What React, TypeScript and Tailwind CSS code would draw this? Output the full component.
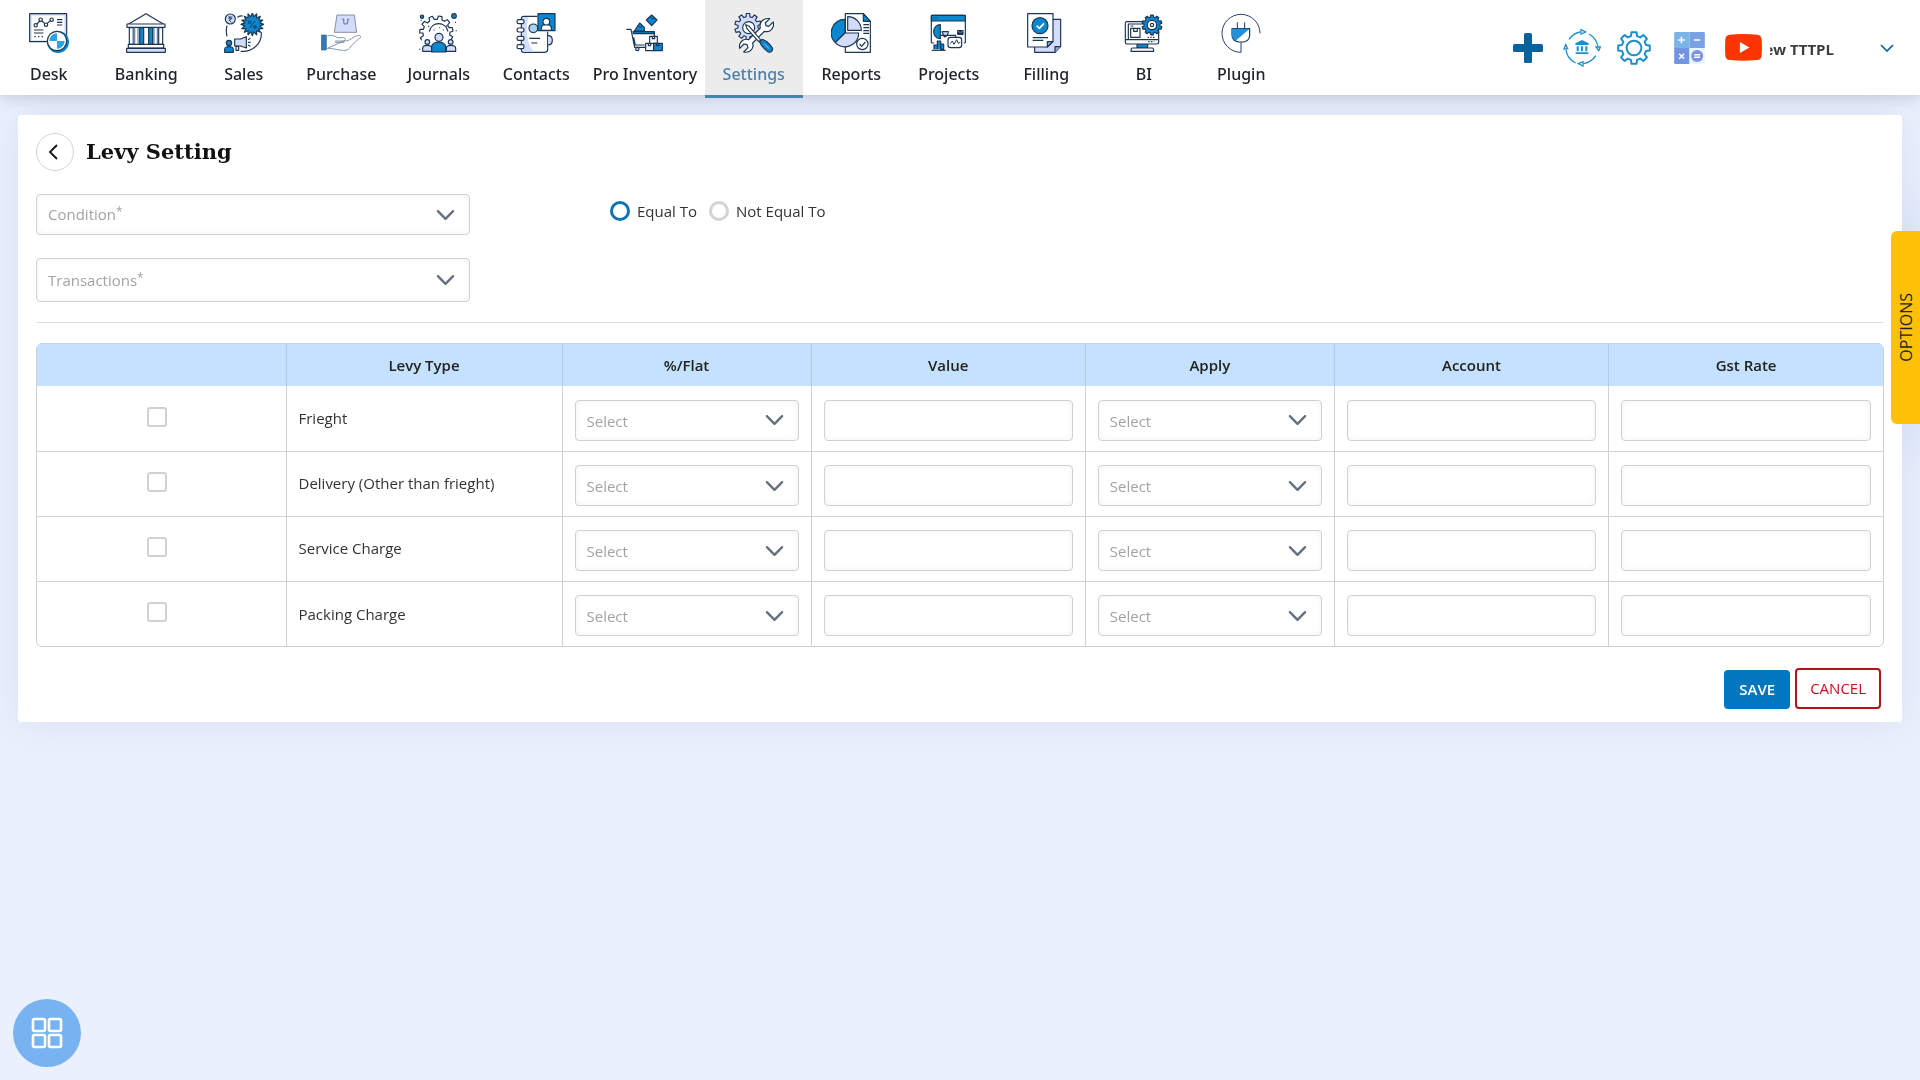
import { useState } from "react";
import type { ReactNode } from "react";

const NAVY = "#1c3553";
const BLUE = "#0b87cf";
const LILAC = "#d3dcf8";

// closed outline of a cog; depth is how far the teeth stand out
function gearPath(cx: number, cy: number, teeth: number, outer: number, depth: number) {
  const inner = outer - depth;
  const step = (Math.PI * 2) / teeth;
  const points: string[] = [];
  for (let i = 0; i < teeth; i++) {
    const a = i * step - Math.PI / 2;
    const corners = [
      [inner, -0.32],
      [outer, -0.2],
      [outer, 0.2],
      [inner, 0.32],
    ];
    for (const [r, t] of corners) {
      const x = cx + r * Math.cos(a + t * step);
      const y = cy + r * Math.sin(a + t * step);
      points.push(`${x.toFixed(1)} ${y.toFixed(1)}`);
    }
  }
  return `M${points.join("L")}Z`;
}

function starPath(cx: number, cy: number, spikes: number, outer: number, inner: number) {
  const points: string[] = [];
  for (let i = 0; i < spikes * 2; i++) {
    const r = i % 2 === 0 ? outer : inner;
    const a = (i * Math.PI) / spikes - Math.PI / 2;
    points.push(`${(cx + r * Math.cos(a)).toFixed(1)} ${(cy + r * Math.sin(a)).toFixed(1)}`);
  }
  return `M${points.join("L")}Z`;
}

function NavIcon({ children }: { children: ReactNode }) {
  return (
    <svg
      viewBox="0 0 120 120"
      className="h-10 w-10"
      fill="none"
      stroke={NAVY}
      strokeWidth={3.5}
      strokeLinejoin="round"
      aria-hidden="true"
    >
      {children}
    </svg>
  );
}

function DeskIcon() {
  return (
    <NavIcon>
      <rect x="2" y="2" width="111" height="84" fill={LILAC} />
      <rect x="8" y="8" width="98" height="74" fill="#fff" stroke="none" />
      <path d="M20 37 35 21 51 35 67 20" />
      <circle cx="20" cy="37" r="5" fill="#fff" />
      <circle cx="35" cy="20" r="5" fill="#fff" />
      <circle cx="51" cy="35" r="5" fill="#fff" />
      <circle cx="68" cy="20" r="5" fill="#fff" />
      <path d="M84 20h16M84 28h16M84 36h16M15 51h28M15 60h28" />
      <path d="M16 71h28" strokeDasharray="4 7" />
      <circle cx="87" cy="87" r="33" fill={BLUE} stroke="none" />
      <circle cx="84" cy="84" r="29" fill="#fff" />
      <path d="M84 84V61a23 23 0 0 0-23 23ZM84 84v23a23 23 0 0 0 23-23Z" fill="#2ba3e3" stroke="none" />
    </NavIcon>
  );
}

function BankingIcon() {
  return (
    <NavIcon>
      <path d="M8 33 60 2l52 31" fill="#fff" />
      <rect x="3" y="33" width="114" height="10" fill="#fff" />
      <path d="M10 44h12v50H10zM98 44h12v50H98z" fill="#fff" />
      <path d="M22 44v50M26 44v50M94 44v50M36 44v50M84 44v50" stroke="#5f7da6" />
      <path d="M41 44h12v50H41zM68 44h12v50H68z" fill={BLUE} />
      <rect x="7" y="94" width="106" height="11" fill="#fff" />
      <rect x="2" y="106" width="116" height="12" fill={LILAC} />
    </NavIcon>
  );
}

function SalesIcon() {
  return (
    <NavIcon>
      <circle cx="19" cy="18" r="15" fill={LILAC} />
      <path d="M13 12h12M13 17h12M15 12c9 0 9 9 0 9l7 7" strokeWidth="2.5" />
      <path d="M40 13q8-5 16-4M9 38q-4 14 0 32M112 58c2 30-22 60-62 57" />
      <path d={starPath(85, 34, 16, 34, 23)} fill={BLUE} />
      <path d="M93 24 77 45" strokeWidth="3" />
      <circle cx="77" cy="28" r="4" strokeWidth="3" />
      <circle cx="93" cy="42" r="4" strokeWidth="3" />
      <path d="M2 118v-8c0-12 26-12 26 0v8Z" fill={BLUE} />
      <circle cx="15" cy="90" r="8" fill={BLUE} />
      <path d="M32 78h18l17-7v34l-17-6H32z" fill={LILAC} />
      <path d="M36 100h8v12h-8zM72 80l7-4M72 88h8M72 96l7 4" />
    </NavIcon>
  );
}

function PurchaseIcon() {
  return (
    <NavIcon>
      <g stroke="#6d7f9d" strokeWidth="2.5">
        <path d="M48 6h52l7 52H40z" fill={LILAC} />
        <path d="M63 19h5v8c0 8 12 8 12 0v-8h5" stroke="#7084b0" strokeWidth="3.5" />
        <path
          d="M19 69c10-4 22-1 30 5h18c8 0 8 9 1 10H42M68 84c14 1 22-6 31-12 10-6 21-6 21 0-8 6-24 20-34 33-8 10-20 7-30 6-12-1-22-6-37-5Z"
          fill="#fff"
        />
        <path d="M42 88h28" />
      </g>
      <rect x="1" y="66" width="15" height="45" fill="#3677b5" stroke="#2d659c" strokeWidth="2" />
    </NavIcon>
  );
}

function JournalsIcon() {
  return (
    <NavIcon>
      <path d="M8 82 4 74l9-6-1-8H2l1-11h10l3-8-7-7 7-9 9 5 7-6-2-10 10-4 6 9h9l3-10 11 2v10l7 4 9-5 7 8-6 8 4 8h10l2 10-9 4-1 8 9 5-4 8" />
      <path d="M31 56c6-32 50-32 56 0M82 37l3 4M30 38l-2 4" />
      <path d="M44 51h2M60 44h2M73 51h2" strokeWidth="4" />
      <circle cx="9" cy="11" r="5" fill={BLUE} />
      <circle cx="105" cy="9" r="7" fill={BLUE} />
      <circle cx="25" cy="87" r="7" fill={LILAC} />
      <circle cx="95" cy="87" r="7" fill={LILAC} />
      <path d="M11 115v-9c0-12 27-12 27 0v9ZM82 115v-9c0-12 28-12 28 0v9Z" fill={LILAC} />
      <circle cx="60" cy="73" r="12" fill={LILAC} />
      <path d="M38 117v-16c0-18 42-18 42 0v16Z" fill={BLUE} />
      <path d="M1 109h3M110 53h3M5 22h3M108 28h3" strokeWidth="4" />
    </NavIcon>
  );
}

function ContactsIcon() {
  return (
    <NavIcon>
      <path d="M64 10H24q-8 0-8 8v92q0 8 8 8h62q9 0 9-9V56" fill="#fff" />
      <path d="M18 20v90q0 6 8 6h28C30 92 28 40 38 12H24q-6 0-6 8" fill={LILAC} stroke="none" />
      <path d="M96 68q13 0 13 14t-13 14" fill={LILAC} />
      <circle cx="52" cy="46" r="13" fill="#a9d3f3" />
      <rect x="66" y="2" width="51" height="51" fill={BLUE} />
      <path d="M76 52v-6c0-16 30-16 30 0v6Z" fill="#fff" />
      <circle cx="91" cy="26" r="10" fill="#fff" />
      <path d="M40 76h32M46 90h18" />
      {[20, 45, 70, 95].map((y) => (
        <rect key={y} x="3" y={y} width="21" height="12" rx="5" fill="#fff" />
      ))}
    </NavIcon>
  );
}

function InventoryIcon() {
  return (
    <NavIcon>
      <path d="M80 6 96 21 80 38 64 21ZM28 54l16-24 14 13v11Z" fill={BLUE} />
      <path d="m76 12 6 6 7-2M40 38l6 5 5-3" strokeWidth="3" />
      <path d="M4 49h14l11 54h33M24 58h64v18M26 73l5 23h28" />
      <path d="M24 56h64v6H25z" fill={BLUE} />
      <circle cx="37" cy="108" r="5" fill={LILAC} />
      <path d="M74 70h23v21H74zM62 91h24v22H62z" fill="#fff" />
      <path d="M86 91h26v22H86z" fill={BLUE} />
      <path d="M82 70v7h7v-7M70 91v7h7v-7M95 91v7h7v-7" />
    </NavIcon>
  );
}

function SettingsIcon() {
  return (
    <NavIcon>
      <path d={gearPath(42, 41, 10, 40, 10)} fill={LILAC} />
      <circle cx="44" cy="44" r="18" fill="#fff" />
      <path
        d="M107 17 94 30l2 8 8 2 14-13c4 18-10 33-27 28L56 90c5 17-9 31-27 27l13-13-3-9-9-2-13 13c-4-17 10-31 27-26l35-35c-5-18 10-31 28-28Z"
        fill="#fff"
      />
      <path d="m35 35 11 5 34 41-6 5-35-39Z" fill="#fff" />
      <path d="m77 87 7-8c10 2 22 13 30 24 6 10-7 19-14 12-12-10-19-18-23-28Z" fill={BLUE} />
      <path d="m91 92 14 15" stroke="#7cc3ee" strokeWidth="3" />
    </NavIcon>
  );
}

function ReportsIcon() {
  return (
    <NavIcon>
      <path d="M43 2h54l21 23v93H43Z" fill="#fff" />
      <path d="M97 2v23h21Z" fill={BLUE} />
      <path d="M97 35h17M97 44h17M97 53h17M97 61h17" />
      <path d="M42 60V19a41 41 0 0 0-29 70Z" fill={BLUE} />
      <path d="M42 60h41a41 41 0 0 1-70 29Z" fill={LILAC} />
      <path d="M50 11v41h41a41 41 0 0 0-41-41Z" fill={LILAC} />
      <circle cx="94" cy="93" r="17" fill="#fff" />
      <path d="m86 93 6 7 11-13" />
    </NavIcon>
  );
}

function ProjectsIcon() {
  return (
    <NavIcon>
      <path d="M7 90V11q0-4 4-4h94q4 0 4 4v79M108 90h-4M7 90h8" />
      <path d="M7 7h102v17H7Z" fill={BLUE} />
      <path d="M13 15h14" strokeDasharray="3 3" />
      <path d="M34 35a20 21 0 0 0 0 42Z" fill={BLUE} />
      <path d="M39 56h19q-1 14-12 16Z" fill={LILAC} />
      <path d="M34 67h46v10" />
      <rect x="86" y="53" width="16" height="11" fill={NAVY} />
      <path d="m86 54 8 5 8-5" stroke="#8aa3c4" strokeWidth="2" />
      <rect x="57" y="73" width="41" height="31" rx="8" fill="#fff" />
      <path d="m64 92 6-8 5 10 8-14 5 11 6-3" strokeWidth="3" />
      <path d="M15 109V96h10v13M25 109V84h10v25M35 109V93h9v16Z" fill={BLUE} />
      <path d="M8 112h42" />
    </NavIcon>
  );
}

function FillingIcon() {
  return (
    <NavIcon>
      <path d="M30 19h74v81l-17 18H26V60" fill={LILAC} />
      <path d="M87 118v-17h17" fill="#8fa6cf" />
      <path d="M5 2h76v83l-17 17H5Z" fill="#fff" />
      <path d="M64 102V86h17Z" fill="#8fa6cf" />
      <circle cx="42" cy="38" r="24" fill={BLUE} />
      <path d="m32 38 8 8 14-15" stroke="#fff" strokeWidth="5" />
      <path d="M20 74h46M20 82h32" />
    </NavIcon>
  );
}

function BiIcon() {
  return (
    <NavIcon>
      <path d="M39 92h32v13H39z" fill={BLUE} />
      <path d="M25 105h60q4 0 4 10H21q0-10 4-10Z" fill="#fff" />
      <rect x="4" y="26" width="100" height="67" rx="5" fill="#fff" />
      <path d="M60 33H13v46" />
      <path d="M5 80h98" />
      <rect x="20" y="46" width="28" height="27" fill="#fff" />
      <path d="M29 46v9h11v-9M20 39h8" />
      <path d="M71 73h20M73 86h18" strokeDasharray="4 4" />
      <path d={gearPath(84, 36, 10, 30, 6)} fill={BLUE} />
      <circle cx="84" cy="36" r="14" fill="#fff" />
      <circle cx="84" cy="36" r="5" fill="#fff" />
    </NavIcon>
  );
}

function PluginIcon() {
  return (
    <NavIcon>
      <path d="M117 61A57 57 0 1 0 60 118V88" stroke="#27406f" strokeWidth="3" />
      <path d="M33 47h53v20c0 12-9 20-20 20H54C42 87 33 78 33 67Z" fill="#fff" />
      <path d="M33 47h53L44 83c-7-4-11-9-11-16Z" fill="#2390d8" stroke="none" />
      <path d="M49 28v19M71 28v19" strokeWidth="3" />
    </NavIcon>
  );
}

const navItems = [
  { label: "Desk", icon: <DeskIcon /> },
  { label: "Banking", icon: <BankingIcon /> },
  { label: "Sales", icon: <SalesIcon /> },
  { label: "Purchase", icon: <PurchaseIcon /> },
  { label: "Journals", icon: <JournalsIcon /> },
  { label: "Contacts", icon: <ContactsIcon /> },
  { label: "Pro Inventory", icon: <InventoryIcon />, wide: true },
  { label: "Settings", icon: <SettingsIcon />, active: true },
  { label: "Reports", icon: <ReportsIcon /> },
  { label: "Projects", icon: <ProjectsIcon /> },
  { label: "Filling", icon: <FillingIcon /> },
  { label: "BI", icon: <BiIcon /> },
  { label: "Plugin", icon: <PluginIcon /> },
];

const levyTypes = ["Frieght", "Delivery (Other than frieght)", "Service Charge", "Packing Charge"];

function Chevron() {
  return (
    <svg
      viewBox="0 0 20 12"
      className="pointer-events-none absolute top-1/2 right-[15px] h-3 w-[19px] -translate-y-1/2"
      fill="none"
      stroke="#64707d"
      strokeWidth="2.5"
      strokeLinecap="round"
      strokeLinejoin="round"
      aria-hidden="true"
    >
      <path d="m2 2 8 8 8-8" />
    </svg>
  );
}

const fieldClass =
  "block w-full rounded border border-[#cfd1d4] bg-white text-[15px] outline-none shadow-[inset_0_0_6px_rgba(0,0,0,0.05)] focus:border-[#0277bd]";

function LabelledSelect({ id, label, height }: { id: string; label: string; height: string }) {
  const [value, setValue] = useState("");

  return (
    <div className="relative">
      <select
        id={id}
        value={value}
        onChange={(event) => setValue(event.target.value)}
        className={`${fieldClass} ${height} appearance-none px-3`}
      >
        <option value=""></option>
      </select>
      <label
        htmlFor={id}
        className="pointer-events-none absolute inset-y-0 left-3 flex items-center text-[15px] text-[#a3a3a3]"
      >
        <span>
          {label}
          <sup className="-top-1 text-xs">*</sup>
        </span>
      </label>
      <Chevron />
    </div>
  );
}

function CellSelect({ label }: { label: string }) {
  return (
    <div className="relative">
      <select
        aria-label={label}
        className={`${fieldClass} h-[41px] appearance-none px-[11px] pt-px text-[#a3a3a3]`}
      >
        <option>Select</option>
      </select>
      <Chevron />
    </div>
  );
}

function TopBar() {
  return (
    <header className="relative z-20 flex h-[95px] justify-between bg-white shadow-[0_2px_14px_rgba(60,70,100,0.25)]">
      <nav className="flex h-[98px] max-w-[1290px] flex-1">
        {navItems.map((item) => (
          <a
            key={item.label}
            href="#"
            className={`flex flex-col items-center border-b-3 pt-[13px] font-['Noto_Sans',sans-serif] text-base font-medium whitespace-nowrap ${
              item.wide ? "w-[120px]" : "flex-1"
            } ${
              item.active
                ? "border-[#4584ab] bg-[#ececec] text-[#4a80aa]"
                : "border-transparent text-[#212529]"
            }`}
          >
            {item.icon}
            <span className="mt-[9px]">{item.label}</span>
          </a>
        ))}
      </nav>

      <div className="flex items-center gap-4 pr-[26px]">
        <button aria-label="Add">
          <svg viewBox="0 0 30 30" className="h-[30px] w-[30px]" fill="#08629c">
            <rect x="11" width="8" height="30" rx="1.5" />
            <rect y="11" width="30" height="8" rx="1.5" />
          </svg>
        </button>
        <button aria-label="Bank sync" className="ml-1">
          <svg viewBox="0 0 114 114" className="h-[38px] w-[38px]" fill="none" stroke="#1c8fcc" strokeWidth="4">
            <path d="M18 31Q32 12 52 9M78 15q22 12 27 38M98 80q-11 19-36 24M38 102Q12 90 9 62" />
            <path d="m54 2 14 7-14 6ZM99 54h13l-5 11ZM60 98v13l-14-7ZM3 60l5-13 6 12Z" fill="#fff" />
            <path
              d="M57 33 77 43v5H37v-5ZM41 52h6v15h-6zM54 52h6v15h-6zM67 52h6v15h-6zM38 70h38v5H38z"
              fill="#1c8fcc"
              stroke="none"
            />
          </svg>
        </button>
        <button aria-label="Preferences">
          <svg viewBox="0 0 102 102" className="h-[34px] w-[34px]" fill="none" stroke="#1c8fcc" strokeWidth="6">
            <path d={gearPath(51, 51, 8, 48, 11)} strokeLinejoin="round" />
            <circle cx="51" cy="51" r="22" />
          </svg>
        </button>
        <button aria-label="Calculator" className="ml-[7px]">
          <svg viewBox="0 0 92 96" className="h-8 w-[31px]">
            <path d="M4 0h42v48H0V4q0-4 4-4Z" fill="#78b6e8" />
            <path d="M46 0h42q4 0 4 4v44H46Z" fill="#7aa0e6" />
            <path d="M0 48h46v48H4q-4 0-4-4Z" fill="#7295e2" />
            <path d="M46 48h46v44q0 4-4 4H46Z" fill="#e9f4fe" />
            <circle cx="69" cy="72" r="18" fill="#7b92df" />
            <path
              d="M12 24h20M22 14v20M59 24h19M15 65l15 15M30 65 15 80M60 68h18M60 76h18"
              stroke="#fff"
              strokeWidth="4.5"
            />
          </svg>
        </button>
        <a href="#" aria-label="YouTube" className="ml-1">
          <svg viewBox="0 0 112 82" className="h-[27px] w-[37px]">
            <path
              d="M14 2q42-4 84 0 12 1 13 14 2 25 0 50-1 12-13 13-42 4-84 0Q2 78 1 66q-2-25 0-50Q2 3 14 2Z"
              fill="#fd3302"
            />
            <path d="M45 24v34l29-17Z" fill="#fff" />
          </svg>
        </a>
        <div className="mt-1 -ml-2 flex w-16 justify-end overflow-hidden">
          <span className="text-[15px] font-bold whitespace-nowrap text-[#3d3d3d]">New TTTPL</span>
        </div>
        <button aria-label="Switch company" className="ml-[30px]">
          <svg viewBox="0 0 14 8" className="h-2 w-3.5" fill="none" stroke="#08629c" strokeWidth="1.7">
            <path d="m1 1 6 6 6-6" />
          </svg>
        </button>
      </div>
    </header>
  );
}

export default function App() {
  const [condition, setCondition] = useState("none");

  return (
    <div className="min-h-screen bg-[#eaf0fd] font-['Open_Sans',sans-serif] text-[#333]">
      <TopBar />

      <main className="relative z-10 mx-[18px] mt-5 rounded bg-white px-[18px] pt-[18px] pb-[13px] shadow-[0_0_40px_rgba(90,110,160,0.12)]">
        <div className="flex items-center gap-3">
          <button
            aria-label="Back"
            className="flex h-[38px] w-[38px] items-center justify-center rounded-full border border-[#d5d5d5]"
          >
            <svg viewBox="0 0 10 16" className="mr-1 h-4 w-2.5" fill="none" stroke="#111" strokeWidth="1.8">
              <path d="M9 1 2 8l7 7" />
            </svg>
          </button>
          <h1 className="font-['DejaVu_Serif',serif] text-[21px] leading-7 font-bold text-[#111]">Levy Setting</h1>
        </div>

        <div className="mt-[23px] flex gap-[140px]">
          <div className="flex w-[434px] flex-col gap-[23px]">
            <LabelledSelect id="condition" label="Condition" height="h-[41px]" />
            <LabelledSelect id="transactions" label="Transactions" height="h-11" />
          </div>
          <div className="mt-[7px] flex items-start gap-3">
            <label className="flex h-5 items-center gap-[7px] text-[15px]">
              <input
                type="radio"
                name="condition-match"
                checked={condition === "equal"}
                onChange={() => setCondition("equal")}
                className="h-5 w-5 appearance-none rounded-full border-3 border-[#0b74b8] checked:bg-[#0b74b8]"
              />
              Equal To
            </label>
            <label className="flex h-5 items-center gap-[7px] text-[15px]">
              <input
                type="radio"
                name="condition-match"
                checked={condition === "not-equal"}
                onChange={() => setCondition("not-equal")}
                className="h-5 w-5 appearance-none rounded-full border-3 border-[#d3d3d3] checked:bg-[#d3d3d3]"
              />
              Not Equal To
            </label>
          </div>
        </div>

        <hr className="mt-5 border-[#dedede]" />

        <div className="mt-5 overflow-hidden rounded-md border border-[#cfd1d4]">
          <table className="w-full table-fixed border-collapse">
            <thead>
              <tr className="h-[42px] bg-[#c4e1fd] text-[15px] text-[#222]">
                <th className="w-[249px] border-r border-[#aecdea]"></th>
                <th className="w-[276px] border-r border-[#aecdea] font-semibold">Levy Type</th>
                <th className="w-[249px] border-r border-[#aecdea] font-semibold">%/Flat</th>
                <th className="border-r border-[#aecdea] font-semibold">Value</th>
                <th className="w-[249px] border-r border-[#aecdea] font-semibold">Apply</th>
                <th className="border-r border-[#aecdea] font-semibold">Account</th>
                <th className="font-semibold">Gst Rate</th>
              </tr>
            </thead>
            <tbody className="divide-y divide-[#cfd1d4]">
              {levyTypes.map((levy) => (
                <tr key={levy} className="h-[65px] divide-x divide-[#cfd1d4] text-[15px]">
                  <td className="pr-2 pb-1.5 text-center">
                    <input
                      type="checkbox"
                      aria-label={levy}
                      className="h-5 w-5 appearance-none rounded-[3px] border-2 border-[#cfd1d4] align-middle checked:bg-[#0277bd]"
                    />
                  </td>
                  <td className="px-3">{levy}</td>
                  <td className="px-3 pt-1">
                    <CellSelect label={`${levy} percent or flat`} />
                  </td>
                  <td className="px-3 pt-1">
                    <input aria-label={`${levy} value`} className={`${fieldClass} h-[41px] px-3`} />
                  </td>
                  <td className="px-3 pt-1">
                    <CellSelect label={`${levy} apply`} />
                  </td>
                  <td className="px-3 pt-1">
                    <input aria-label={`${levy} account`} className={`${fieldClass} h-[41px] px-3`} />
                  </td>
                  <td className="px-3 pt-1">
                    <input aria-label={`${levy} gst rate`} className={`${fieldClass} h-[41px] px-3`} />
                  </td>
                </tr>
              ))}
            </tbody>
          </table>
        </div>

        <div className="mt-[21px] flex items-end justify-end gap-[5px] pr-[3px]">
          <button className="h-[39px] rounded bg-[#0277bd] px-[15px] text-[15px] font-semibold text-white">
            SAVE
          </button>
          <button className="h-[41px] rounded border-2 border-[#b5121b] px-[13px] text-[15px] font-medium text-[#c4111b]">
            CANCEL
          </button>
        </div>
      </main>

      <div className="fixed top-[231px] right-0 z-0 h-[193px] w-px shadow-[0_0_60px_10px_rgba(90,150,220,0.4)]" />
      <button className="fixed top-[231px] right-0 z-20 flex h-[193px] w-[29px] items-center justify-center rounded-l-md bg-[#ffc107] text-base text-[#222]">
        <span className="rotate-180 [writing-mode:vertical-rl]">OPTIONS</span>
      </button>

      <button
        aria-label="Apps"
        className="fixed bottom-[13px] left-[13px] z-20 flex h-[68px] w-[68px] items-center justify-center rounded-full bg-[#76b3f0]"
      >
        <svg viewBox="0 0 32 32" className="h-8 w-8" fill="none" stroke="#fff" strokeWidth="2.6">
          <rect x="2" y="2" width="12" height="12" rx="1.5" />
          <rect x="18" y="2" width="12" height="12" rx="1.5" />
          <rect x="2" y="18" width="12" height="12" rx="1.5" />
          <rect x="18" y="18" width="12" height="12" rx="1.5" />
        </svg>
      </button>
    </div>
  );
}
